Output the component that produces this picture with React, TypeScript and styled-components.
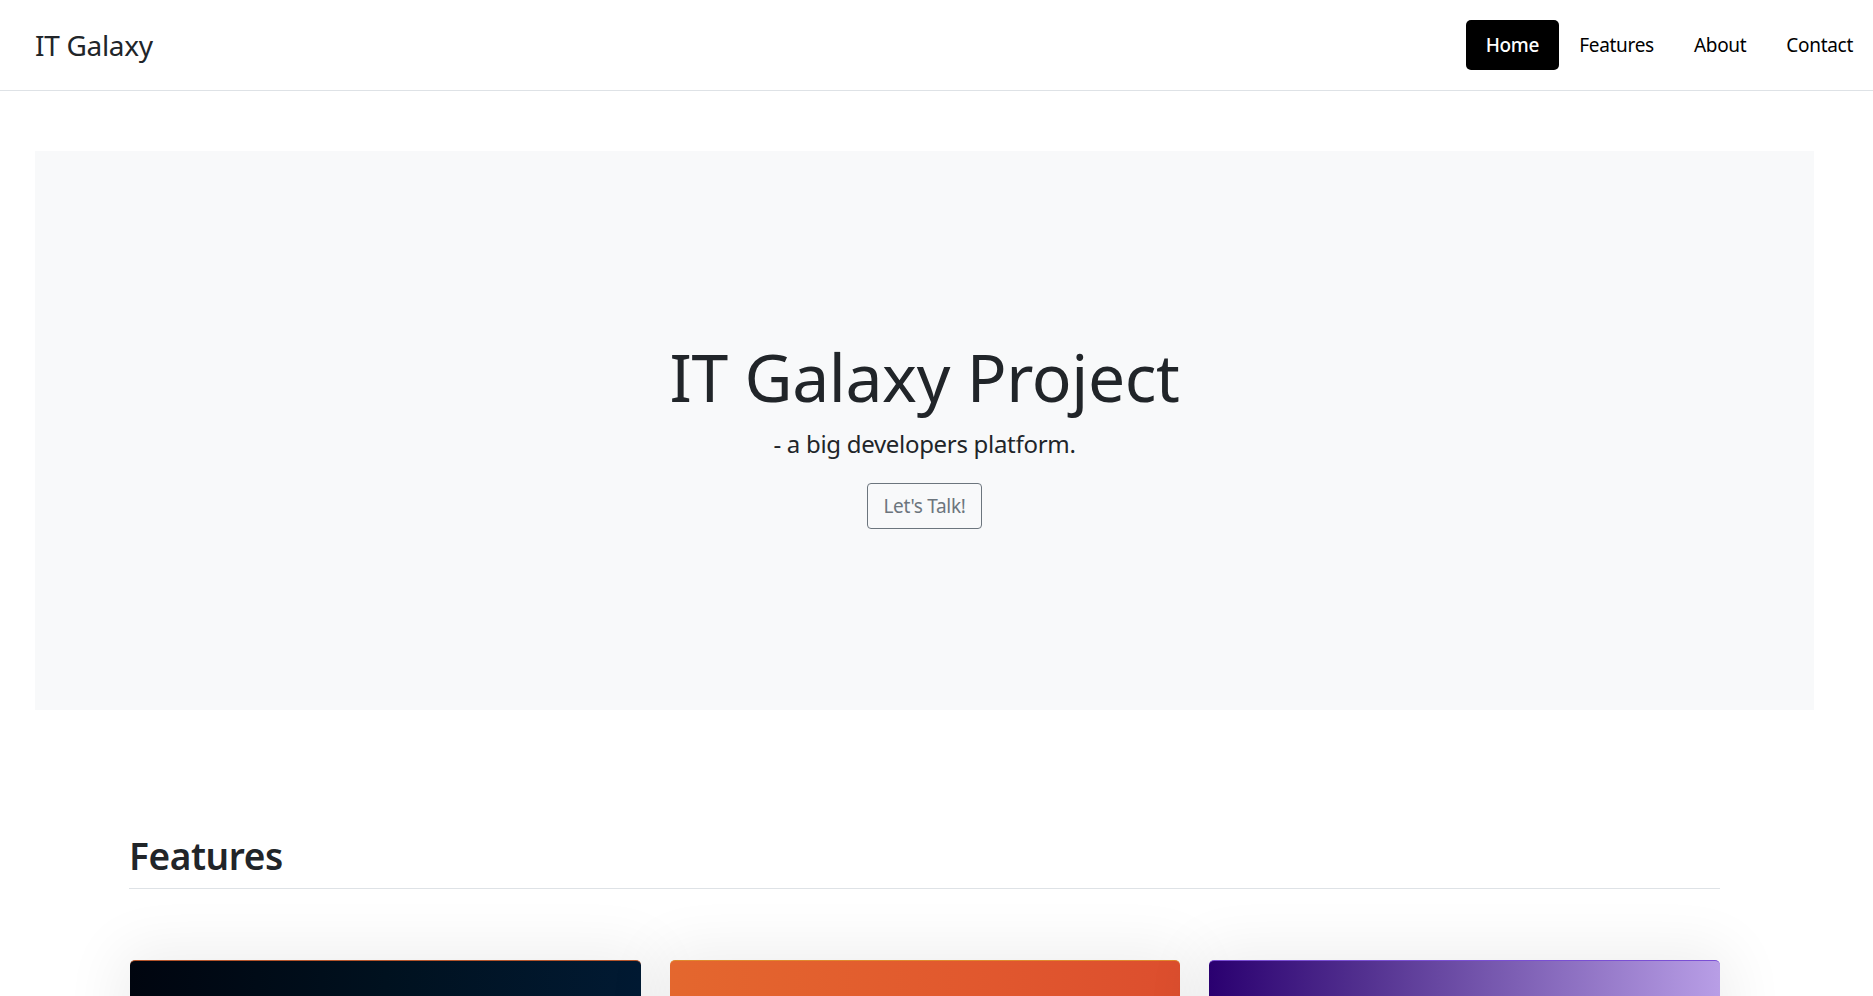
import React from 'react';
import styled, { createGlobalStyle } from 'styled-components';

const GlobalStyle = createGlobalStyle`
  * { box-sizing: border-box; }
  body {
    margin: 0;
    background: #fff;
    color: #212529;
    font-family: "Noto Sans", "Open Sans", sans-serif;
  }
`;

const NavBar = styled.header`
  height: 91px;
  display: flex;
  align-items: center;
  justify-content: space-between;
  padding-left: 35px;
  border-bottom: 1px solid #dee2e6;
`;

const Brand = styled.a`
  font-size: 28px;
  color: #212529;
  text-decoration: none;
  letter-spacing: -0.3px;
`;

const NavList = styled.nav`
  display: flex;
  align-items: center;
`;

const NavLink = styled.a<{ $active?: boolean }>`
  display: block;
  height: 50px;
  line-height: 50px;
  padding: 0 20px;
  border-radius: 5px;
  font-size: 19px;
  letter-spacing: -0.3px;
  text-decoration: none;
  color: ${p => (p.$active ? '#fff' : '#000')};
  background: ${p => (p.$active ? '#000' : 'transparent')};
  font-weight: ${p => (p.$active ? 500 : 400)};
`;

const Hero = styled.section`
  margin: 60px 59px 0 35px;
  height: 559px;
  background: #f8f9fa;
  display: flex;
  flex-direction: column;
  align-items: center;
  justify-content: center;
  padding-top: 5px;
`;

const HeroTitle = styled.h1`
  margin: 0;
  font-size: 66px;
  font-weight: 400;
  line-height: 1.2;
  letter-spacing: -0.4px;
`;

const HeroLead = styled.p`
  margin: 10px 0 21px;
  font-size: 24px;
  line-height: 1.5;
  letter-spacing: -0.3px;
`;

const OutlineButton = styled.button`
  height: 46px;
  padding: 0 15px;
  font-family: inherit;
  font-size: 19px;
  color: #6c757d;
  background: transparent;
  border: 1px solid #6c757d;
  border-radius: 4px;
  letter-spacing: -0.3px;
`;

const Section = styled.section`
  margin: 124px 153px 0 129px;
`;

const SectionTitle = styled.h2`
  margin: 0;
  padding-bottom: 10px;
  font-size: 37px;
  font-weight: 600;
  line-height: 1.2;
  letter-spacing: -0.4px;
  border-bottom: 1px solid #dee2e6;
`;

const CardGrid = styled.div`
  margin-top: 71px;
  display: grid;
  grid-template-columns: repeat(3, 1fr);
  gap: 29px;
  padding-left: 1px;
`;

const Card = styled.div<{ $bg: string; $edge: string }>`
  height: 260px;
  border-radius: 5px 5px 0 0;
  background: ${p => p.$bg};
  border-top: 1px solid ${p => p.$edge};
  box-shadow: 0 0 60px 10px rgba(0, 0, 0, 0.07);
`;

const cards = [
  { bg: 'linear-gradient(90deg, #00050f 0%, #00111f 50%, #011a33 100%)', edge: '#b5552b' },
  { bg: 'linear-gradient(90deg, #e4672e 0%, #e1582e 60%, #dc4e2e 100%)', edge: '#e0892e' },
  { bg: 'linear-gradient(90deg, #2a0070 0%, #52308f 30%, #7d5fb4 60%, #b89ee6 100%)', edge: '#7a4fd4' },
];

export default function App() {
  return (
    <>
      <GlobalStyle />
      <NavBar>
        <Brand href="#">IT Galaxy</Brand>
        <NavList>
          <NavLink href="#" $active>Home</NavLink>
          <NavLink href="#">Features</NavLink>
          <NavLink href="#">About</NavLink>
          <NavLink href="#">Contact</NavLink>
        </NavList>
      </NavBar>
      <Hero>
        <HeroTitle>IT Galaxy Project</HeroTitle>
        <HeroLead>- a big developers platform.</HeroLead>
        <OutlineButton>Let's Talk!</OutlineButton>
      </Hero>
      <Section>
        <SectionTitle>Features</SectionTitle>
        <CardGrid>
          {cards.map((c, i) => (
            <Card key={i} $bg={c.bg} $edge={c.edge} />
          ))}
        </CardGrid>
      </Section>
    </>
  );
}
